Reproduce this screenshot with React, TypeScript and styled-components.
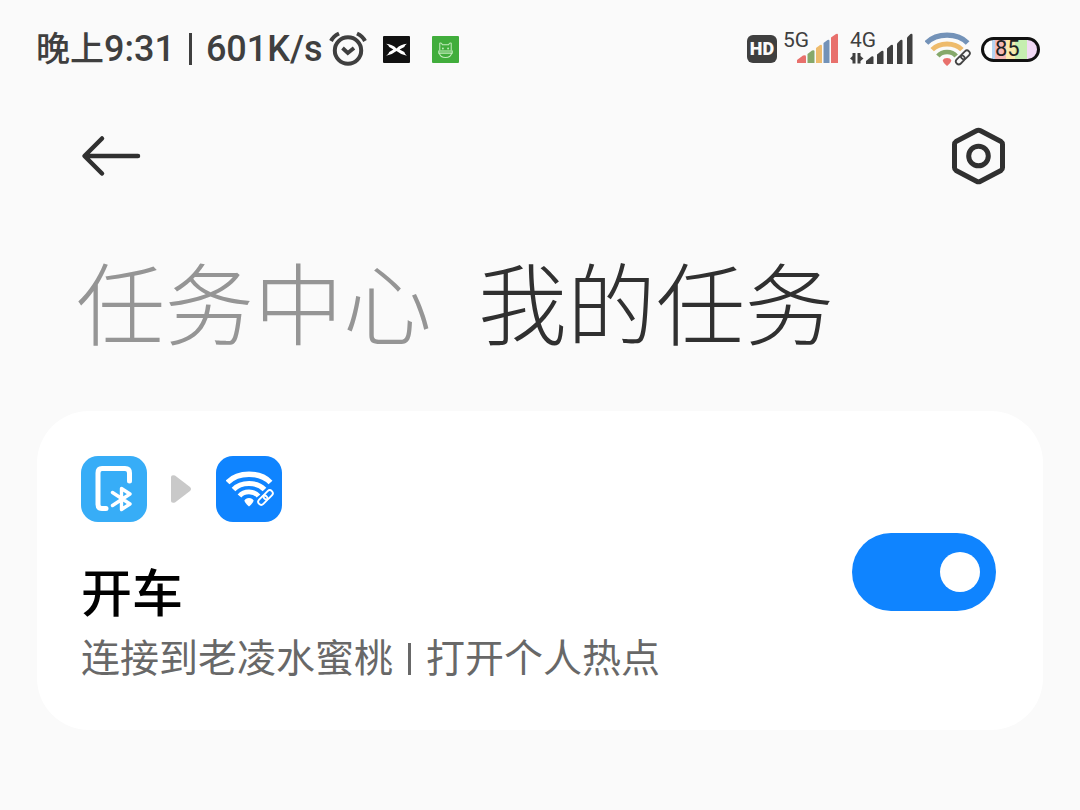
import { useState } from 'react';
import styled, { createGlobalStyle } from 'styled-components';

const GlobalStyle = createGlobalStyle`
  * { box-sizing: border-box; }
  body {
    margin: 0;
    background: #fafafa;
    color: #303030;
    font-family: Roboto, "Noto Sans CJK SC", sans-serif;
  }
  button { border: 0; padding: 0; background: none; color: inherit; font: inherit; cursor: pointer; }
  svg { display: block; flex: none; }
`;

const Page = styled.div`
  min-height: 100vh;
`;

const StatusBar = styled.header`
  display: flex;
  align-items: center;
  justify-content: space-between;
  height: 98px;
  padding: 0 40px 0 36px;
  color: #3f3f3f;
`;

const StatusGroup = styled.div<{ $gap: number }>`
  display: flex;
  align-items: center;
  gap: ${(p) => p.$gap}px;
`;

const StatusText = styled.div`
  display: flex;
  align-items: center;
  gap: 14px;
  font-size: 36px;
  font-weight: 500;
  line-height: 48px;
  white-space: nowrap;
`;

const DayPart = styled.span`
  font-size: 34px;
`;

const Divider = styled.span<{ $height: number }>`
  width: 3px;
  height: ${(p) => p.$height}px;
  background: currentColor;
`;

const StatusIcons = styled.div<{ $gap: number }>`
  display: flex;
  align-items: center;
  gap: ${(p) => p.$gap}px;
`;

const HdBadge = styled.span`
  width: 30px;
  height: 28px;
  border-radius: 6px;
  background: #3f3f3f;
  color: #fafafa;
  font-size: 18px;
  font-weight: 900;
  line-height: 28px;
  text-align: center;
`;

const Signal = styled.div`
  display: grid;
`;

const Network = styled.span`
  grid-area: 1 / 1;
  font-size: 21px;
  line-height: 16px;
`;

const SignalBars = styled.svg`
  grid-area: 1 / 1;
`;

const Battery = styled.span`
  width: 59px;
  height: 25px;
  padding-left: 11px;
  border: 3px solid #111;
  border-radius: 13px;
  background: linear-gradient(90deg, #fff 0 8px, #b5d4f2 8px 11px, #f5b8b5 11px 22px, #fbe8ac 22px 31px, #c5eeb0 31px 43px, #f1d9f5 43px);
  color: #222;
  font-size: 22px;
  line-height: 18px;
`;

const Toolbar = styled.nav`
  display: flex;
  align-items: center;
  justify-content: space-between;
  height: 116px;
  padding: 0 72px 0 80px;
`;

const Tabs = styled.div`
  display: flex;
  gap: 46px;
  padding: 30px 76px 0;
`;

const Tab = styled.button<{ $active: boolean }>`
  && {
    color: ${(p) => (p.$active ? '#303030' : '#959595')};
    font-size: 89px;
    font-weight: 300;
    line-height: 128px;
    white-space: nowrap;
  }
`;

const Card = styled.article`
  display: flex;
  align-items: center;
  justify-content: space-between;
  margin: 39px 37px 0;
  padding: 45px 47px 43px 44px;
  border-radius: 52px;
  background: #fff;
`;

const Flow = styled.div`
  display: flex;
  align-items: center;
  gap: 24px;
`;

const AppTile = styled.div<{ $color: string }>`
  width: 66px;
  height: 66px;
  border-radius: 17px;
  background: ${(p) => p.$color};
`;

const TaskTitle = styled.h2`
  margin: 39px 0 0;
  color: #000;
  font-size: 51px;
  font-weight: 500;
  line-height: 68px;
`;

const TaskDetail = styled.p`
  display: flex;
  align-items: center;
  gap: 15px;
  margin: 2px 0 0;
  color: #686868;
  font-size: 39px;
  line-height: 56px;
`;

const Switch = styled.input`
  flex: none;
  width: 144px;
  height: 78px;
  margin: 0;
  appearance: none;
  display: flex;
  align-items: center;
  padding: 0 16px;
  border-radius: 39px;
  background: #d8d8d8;
  cursor: pointer;

  &::before {
    content: '';
    width: 40px;
    height: 40px;
    border-radius: 50%;
    background: #fff;
  }

  &:checked {
    justify-content: flex-end;
    background: #0f84ff;
  }
`;

const AlarmIcon = () => (
  <svg width="38" height="36" viewBox="0 0 38 36" fill="none" stroke="#3f3f3f" strokeWidth="4">
    <circle cx="19" cy="19.500" r="13.2" />
    <path d="M2 10 Q4.500 5 10 2.500 M36 10 Q33.500 5 28 2.500" />
    <path d="M13.500 17 L18.800 22 L25 17" strokeWidth="3.800" />
  </svg>
);

const WingIcon = () => (
  <svg width="27" height="27" viewBox="0 0 26 26">
    <rect width="26" height="26" rx="1" fill="#111" />
    <path d="M3 7.500 Q9 8 13 12 Q17 8 23 7.500 Q21 9 20.500 10.500 L16 13 L20.500 15.500 Q21 17.500 23 19 Q17 18 13 14.500 Q9 18 3 19 Q5.500 17.500 6 15.500 L10 13 L6 10.500 Q5.500 9 3 7.500Z" fill="#fff" />
  </svg>
);

const RobotIcon = () => (
  <svg width="27" height="27" viewBox="0 0 26 26">
    <rect width="26" height="26" rx="1" fill="#41ad3c" />
    <g fill="none" stroke="#c4ecbd" strokeWidth="1">
      <path d="M7.500 14 V7 Q9 6 10 8.500 H16 Q17 6 18.500 7 V14" />
      <path d="M6.500 14.500 H19.500 V16.500 H6.500Z M7 16.500 Q8 20.800 13 20.800 Q18 20.800 19 16.500" />
    </g>
    <circle cx="10.500" cy="12" r="0.900" fill="#c4ecbd" />
    <circle cx="15.500" cy="12" r="0.900" fill="#c4ecbd" />
  </svg>
);

const barShapes = [
  'M0 31 V28 L6 23.500 Q9 22.500 9 24.500 V31Z',
  'M10.500 31 V22 L15 18.500 Q17.500 17.500 17.500 19.500 V31Z',
  'M19 31 V16 L23 13 Q25 12 25 14 V31Z',
  'M26.500 31 V11 L30.500 8 Q32.500 7 32.500 9 V31Z',
  'M34 31 V5.500 L39 2 Q41 1 41 3 V31Z',
];

const monoBarShapes = [
  'M16 32 V29 L21.500 24.500 Q23.500 23.500 23.500 25.500 V32Z',
  'M27 32 V22.500 L31.500 19 Q33.500 18 33.500 20 V32Z',
  'M37 32 V16.500 L41 13 Q43 12 43 14 V32Z',
  'M47 32 V11.500 L50.500 8 Q52.500 7 52.500 9 V32Z',
  'M57 32 V5.500 L60.500 2 Q62.500 1 62.500 3 V32Z',
];

const ColorSignal = () => (
  <SignalBars width="55" height="34" viewBox="0 0 55 34">
    <g transform="translate(14 0)">
      {['#e8706c', '#86a86a', '#eebb6c', '#7392b8', '#e8706c'].map((fill, i) => (
        <path key={i} d={barShapes[i]} fill={fill} />
      ))}
    </g>
  </SignalBars>
);

const MonoSignal = () => (
  <SignalBars width="63" height="34" viewBox="0 0 63 34" fill="#3f3f3f">
    <path d="M0 26.500 L2.500 24 V21 H5.500 V31.500 H2.500 V28.500Z M7.500 21 H10.500 V24 L13.500 26.500 L10.500 29 V31.500 H7.500Z" />
    {monoBarShapes.map((d) => <path key={d} d={d} />)}
  </SignalBars>
);

const WifiLink = ({ size, colors, link }: { size: number; colors: string[]; link: string }) => (
  <svg width={size} height={size * 0.75} viewBox="0 0 48 36" fill="none">
    <path d="M1.500 11.500 C12 0.500 34 0.500 44.500 11.500" stroke={colors[0]} strokeWidth="5.400" />
    <path d="M7.500 18.500 C15 10.500 31 10.500 38.500 18.500" stroke={colors[1]} strokeWidth="5" />
    <path d="M13.500 25 C18 19.500 28 19.500 32.500 25" stroke={colors[2]} strokeWidth="4.800" />
    <path d="M18.500 29.500 Q19.500 27 23 27 Q26.500 27 27.500 29.500 Q27.500 31.500 23 35.500 Q18.500 31.500 18.500 29.500Z" fill={colors[3]} />
    <g stroke={link} strokeWidth="1.900" transform="rotate(-45 39.500 26.500)">
      <rect x="30.500" y="23.500" width="10.500" height="6" rx="3" />
      <rect x="38" y="23.500" width="10.500" height="6" rx="3" />
    </g>
  </svg>
);

const BackIcon = () => (
  <svg width="62" height="44" viewBox="0 0 62 44" fill="none" stroke="#303030" strokeWidth="4.500" strokeLinecap="round" strokeLinejoin="round">
    <path d="M22 4.500 L4.500 22 L22 39.500 M5 22 H58" />
  </svg>
);

const SettingsIcon = () => (
  <svg width="60" height="60" viewBox="0 0 60 60" fill="none" stroke="#303030" strokeWidth="5" strokeLinejoin="round">
    <path d="M28.500 4.800 Q30.500 3.700 32.500 4.800 L53 15.500 Q54.500 16.500 54.500 18.500 V41.500 Q54.500 43.500 53 44.500 L32.500 55.200 Q30.500 56.300 28.500 55.200 L8 44.500 Q6.500 43.500 6.500 41.500 V18.500 Q6.500 16.500 8 15.500Z" />
    <circle cx="30.500" cy="30" r="9.800" />
  </svg>
);

const PhoneBluetoothIcon = () => (
  <svg width="66" height="66" viewBox="0 0 66 66" fill="none" stroke="#fff" strokeLinejoin="round">
    <path d="M25 52.500 H21 Q17 52.500 17 48.500 V17 Q17 12.500 21 12.500 H44 Q48.500 12.500 48.500 17 V25" strokeWidth="5" strokeLinecap="round" />
    <path d="M31.500 36.500 L49 48 L40.500 53.500 V32.500 L49 38 L31.500 49.500" strokeWidth="3.400" strokeLinecap="round" />
  </svg>
);

const HotspotIcon = () => (
  <svg width="66" height="66" viewBox="0 0 66 66">
    <g transform="translate(10 15)">
      <WifiLink size={48} colors={['#fff', '#fff', '#fff', '#fff']} link="#fff" />
    </g>
  </svg>
);

const ArrowIcon = () => (
  <svg width="21" height="28" viewBox="0 0 21 28">
    <path d="M0 2 Q0 -0.500 4 0.500 L19 12 Q21 14 19 16 L4 27.500 Q0 28.500 0 26Z" fill="#c9c9c9" />
  </svg>
);

export default function App() {
  const [tab, setTab] = useState('我的任务');
  return (
    <Page>
      <GlobalStyle />
      <StatusBar>
        <StatusGroup $gap={6}>
          <StatusText>
            <span><DayPart>晚上</DayPart>9:31</span>
            <Divider $height={32} />
            <span>601K/s</span>
          </StatusText>
          <StatusIcons $gap={16}>
            <AlarmIcon />
            <StatusIcons $gap={22}>
              <WingIcon />
              <RobotIcon />
            </StatusIcons>
          </StatusIcons>
        </StatusGroup>
        <StatusGroup $gap={12}>
          <StatusGroup $gap={6}>
            <HdBadge>HD</HdBadge>
            <Signal>
              <Network>5G</Network>
              <ColorSignal />
            </Signal>
          </StatusGroup>
          <Signal>
            <Network>4G</Network>
            <MonoSignal />
          </Signal>
          <StatusGroup $gap={10}>
            <WifiLink size={46} colors={['#7392b8', '#eebb6c', '#86a86a', '#e8706c']} link="#444" />
            <Battery>85</Battery>
          </StatusGroup>
        </StatusGroup>
      </StatusBar>
      <Toolbar>
        <button type="button" aria-label="返回"><BackIcon /></button>
        <button type="button" aria-label="设置"><SettingsIcon /></button>
      </Toolbar>
      <main>
        <Tabs>
          {['任务中心', '我的任务'].map((name) => (
            <Tab key={name} type="button" $active={tab === name} onClick={() => setTab(name)}>{name}</Tab>
          ))}
        </Tabs>
        <Card>
          <div>
            <Flow>
              <AppTile $color="#37adf7"><PhoneBluetoothIcon /></AppTile>
              <ArrowIcon />
              <AppTile $color="#0f84ff"><HotspotIcon /></AppTile>
            </Flow>
            <TaskTitle id="task-title">开车</TaskTitle>
            <TaskDetail>
              <span>连接到老凌水蜜桃</span>
              <Divider $height={32} />
              <span>打开个人热点</span>
            </TaskDetail>
          </div>
          <Switch type="checkbox" role="switch" defaultChecked aria-labelledby="task-title" />
        </Card>
      </main>
    </Page>
  );
}
